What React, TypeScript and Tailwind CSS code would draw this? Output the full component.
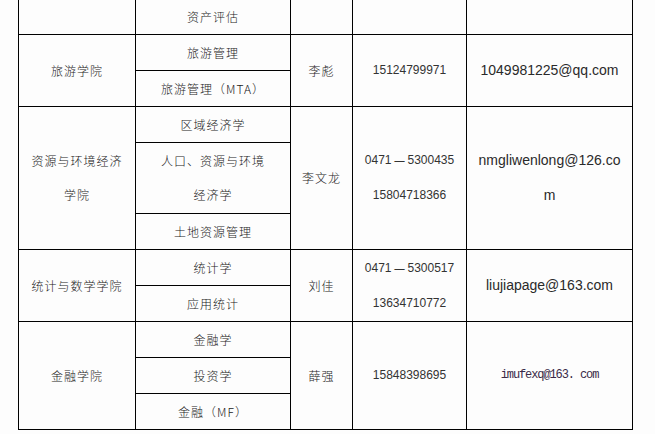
import React from "react";

const cjk = { fontFamily: '"Noto Sans CJK SC", "Noto Sans", sans-serif' };

const Cell = ({
  children,
  className = "",
}: {
  children?: React.ReactNode;
  className?: string;
}) => (
  <div
    className={
      "bg-[#fdfdfd] flex flex-col items-center justify-center text-center " +
      className
    }
  >
    {children}
  </div>
);

const Zh = ({ children }: { children: React.ReactNode }) => (
  <span
    className="text-[12px] font-light leading-[34px] tracking-[1px] text-[#1a1a1a]"
    style={cjk}
  >
    {children}
  </span>
);

const Num = ({ children }: { children: React.ReactNode }) => (
  <span className="font-['Liberation_Sans',sans-serif] text-[12px] leading-[35px] text-[#333]">
    {children}
  </span>
);

const Phone = ({ a, b }: { a: string; b: string }) => (
  <span className="font-['Liberation_Sans',sans-serif] text-[12px] leading-[35px] text-[#333] flex items-center">
    {a}
    <span className="inline-block text-[14px] mx-[1px] font-['Noto_Sans_CJK_SC',sans-serif]">
      －
    </span>
    {b}
  </span>
);

const Mail = ({ children }: { children: React.ReactNode }) => (
  <span className="font-['Liberation_Sans',sans-serif] text-[14px] leading-[35px] text-[#2a2a2a]">
    {children}
  </span>
);

export default function App() {
  return (
    <div className="w-[655px] h-[434px] overflow-hidden bg-[#fdfdfd]">
      <div className="ml-[18px] w-[615px] grid grid-cols-[116px_154px_61px_113px_165px] grid-rows-[34px_35px_35px_35px_70px_35px_35px_35px_35px_35px_35px] gap-px bg-black px-px pb-px">
        {/* row 0 */}
        <Cell className="col-start-1 row-start-1" />
        <Cell className="col-start-2 row-start-1">
          <Zh>资产评估</Zh>
        </Cell>
        <Cell className="col-start-3 row-start-1" />
        <Cell className="col-start-4 row-start-1" />
        <Cell className="col-start-5 row-start-1" />

        {/* 旅游学院 */}
        <Cell className="col-start-1 row-start-2 row-span-2">
          <Zh>旅游学院</Zh>
        </Cell>
        <Cell className="col-start-2 row-start-2">
          <Zh>旅游管理</Zh>
        </Cell>
        <Cell className="col-start-2 row-start-3">
          <Zh>旅游管理（MTA）</Zh>
        </Cell>
        <Cell className="col-start-3 row-start-2 row-span-2">
          <Zh>李彪</Zh>
        </Cell>
        <Cell className="col-start-4 row-start-2 row-span-2">
          <Num>15124799971</Num>
        </Cell>
        <Cell className="col-start-5 row-start-2 row-span-2">
          <Mail>1049981225@qq.com</Mail>
        </Cell>

        {/* 资源与环境经济学院 */}
        <Cell className="col-start-1 row-start-4 row-span-3">
          <Zh>资源与环境经济</Zh>
          <Zh>学院</Zh>
        </Cell>
        <Cell className="col-start-2 row-start-4">
          <Zh>区域经济学</Zh>
        </Cell>
        <Cell className="col-start-2 row-start-5">
          <Zh>人口、资源与环境</Zh>
          <Zh>经济学</Zh>
        </Cell>
        <Cell className="col-start-2 row-start-6">
          <Zh>土地资源管理</Zh>
        </Cell>
        <Cell className="col-start-3 row-start-4 row-span-3">
          <Zh>李文龙</Zh>
        </Cell>
        <Cell className="col-start-4 row-start-4 row-span-3">
          <Phone a="0471" b="5300435" />
          <Num>15804718366</Num>
        </Cell>
        <Cell className="col-start-5 row-start-4 row-span-3">
          <Mail>nmgliwenlong@126.co</Mail>
          <Mail>m</Mail>
        </Cell>

        {/* 统计与数学学院 */}
        <Cell className="col-start-1 row-start-7 row-span-2">
          <Zh>统计与数学学院</Zh>
        </Cell>
        <Cell className="col-start-2 row-start-7">
          <Zh>统计学</Zh>
        </Cell>
        <Cell className="col-start-2 row-start-8">
          <Zh>应用统计</Zh>
        </Cell>
        <Cell className="col-start-3 row-start-7 row-span-2">
          <Zh>刘佳</Zh>
        </Cell>
        <Cell className="col-start-4 row-start-7 row-span-2">
          <Phone a="0471" b="5300517" />
          <Num>13634710772</Num>
        </Cell>
        <Cell className="col-start-5 row-start-7 row-span-2">
          <Mail>liujiapage@163.com</Mail>
        </Cell>

        {/* 金融学院 */}
        <Cell className="col-start-1 row-start-9 row-span-3">
          <Zh>金融学院</Zh>
        </Cell>
        <Cell className="col-start-2 row-start-9">
          <Zh>金融学</Zh>
        </Cell>
        <Cell className="col-start-2 row-start-10">
          <Zh>投资学</Zh>
        </Cell>
        <Cell className="col-start-2 row-start-11">
          <Zh>金融（MF）</Zh>
        </Cell>
        <Cell className="col-start-3 row-start-9 row-span-3">
          <Zh>薛强</Zh>
        </Cell>
        <Cell className="col-start-4 row-start-9 row-span-3">
          <Num>15848398695</Num>
        </Cell>
        <Cell className="col-start-5 row-start-9 row-span-3">
          <span className="font-['Liberation_Mono',monospace] text-[12px] tracking-[-1.1px] leading-[35px] text-[#3a2a48]">
            imufexq@163. com
          </span>
        </Cell>
      </div>
    </div>
  );
}
